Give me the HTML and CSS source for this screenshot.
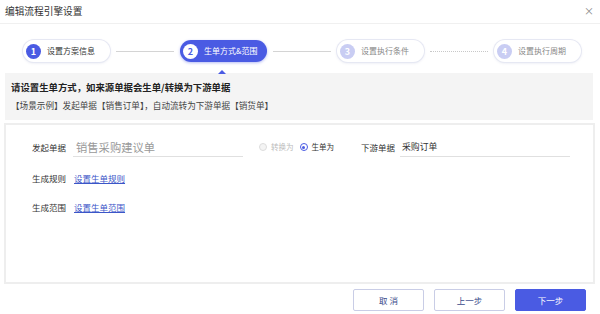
FILE: index.html
```html
<!DOCTYPE html>
<html lang="zh">
<head>
<meta charset="utf-8">
<link rel="stylesheet" href="styles.css">
</head>
<body>
<div class="dialog">
  <div class="header">
    <span class="title">编辑流程引擎设置</span>
    <span class="close">×</span>
  </div>
  <div class="steps">
    <div class="step done"><span class="num">1</span><span class="label">设置方案信息</span></div>
    <div class="line"></div>
    <div class="step active"><span class="num">2</span><span class="label">生单方式&amp;范围</span></div>
    <div class="line"></div>
    <div class="step todo"><span class="num">3</span><span class="label">设置执行条件</span></div>
    <div class="line dotted"></div>
    <div class="step todo"><span class="num">4</span><span class="label">设置执行周期</span></div>
  </div>
  <div class="info">
    <div class="info-title">请设置生单方式，如来源单据会生单/转换为下游单据</div>
    <div class="info-sub">【场景示例】发起单据【销售订单】，自动流转为下游单据【销货单】</div>
  </div>
  <div class="form">
    <div class="row">
      <span class="flabel">发起单据</span>
      <div class="input big">销售采购建议单</div>
      <div class="radios">
        <span class="radio disabled"><span class="dot"></span>转换为</span>
        <span class="radio checked"><span class="dot"></span>生单为</span>
      </div>
      <span class="flabel">下游单据</span>
      <div class="input small">采购订单</div>
    </div>
    <div class="row">
      <span class="flabel">生成规则</span>
      <a class="link">设置生单规则</a>
    </div>
    <div class="row">
      <span class="flabel">生成范围</span>
      <a class="link">设置生单范围</a>
    </div>
  </div>
  <div class="footer">
    <button class="btn">取 消</button>
    <button class="btn">上一步</button>
    <button class="btn primary">下一步</button>
  </div>
</div>
</body>
</html>
```

FILE: styles.css
```css
* { box-sizing: border-box; }
html, body {
  margin: 0;
  padding: 0;
  background: #fff;
  font-family: "Noto Sans CJK SC", "Noto Sans", sans-serif;
  color: #333;
}
.dialog {
  width: 600px;
  height: 314px;
}
.header {
  height: 24px;
  display: flex;
  align-items: center;
  justify-content: space-between;
  padding: 0 6px 0 5px;
  border-bottom: 1px solid #f0f0f0;
}
.title {
  font-size: 9.7px;
  color: #333;
  line-height: 1;
}
.close {
  font-size: 10px;
  color: #888;
  line-height: 1;
  margin-top: -1px;
}
.steps {
  display: flex;
  align-items: center;
  padding-left: 23px;
  margin-top: 16px;
  height: 22px;
}
.step {
  position: relative;
  width: 87px;
  height: 22px;
  border-radius: 11px;
  display: flex;
  align-items: center;
  padding-left: 3px;
  background: #fff;
  box-shadow: 0 0 0 1px #e6e8f3, 0 1px 3px rgba(90, 100, 160, 0.18);
}
.num {
  width: 15px;
  height: 15px;
  border-radius: 50%;
  background: #4a5be3;
  color: #fff;
  font-size: 9px;
  font-weight: 700;
  display: flex;
  align-items: center;
  justify-content: center;
  line-height: 1;
}
.label {
  font-size: 8px;
  margin-left: 6px;
  line-height: 1;
  color: #333;
}
.step.active {
  background: #4a5be3;
  box-shadow: 0 1px 3px rgba(74, 91, 227, 0.4);
}
.step.active .num {
  background: #fff;
  color: #4a5be3;
}
.step.active .label {
  color: #fff;
}
.step.active::after {
  content: "";
  position: absolute;
  left: 38px;
  top: 30px;
  border-left: 4px solid transparent;
  border-right: 4px solid transparent;
  border-bottom: 4px solid #4a5be3;
}
.step.todo .num {
  background: #c9cdf3;
}
.step.todo .label {
  color: #888;
}
.line {
  width: 58px;
  margin: 0 6px;
  border-top: 1px solid #d4d4d4;
}
.line.dotted {
  border-top: 1px dotted #c8c8c8;
}
.info {
  margin: 11px 7px 0 5px;
  background: #f4f4f4;
  height: 47px;
  padding: 6px 6px;
}
.info-title {
  font-size: 9.4px;
  font-weight: 700;
  color: #222;
  line-height: 16px;
}
.info-sub {
  font-size: 8.6px;
  color: #444;
  line-height: 12px;
  margin-top: 4px;
}
.form {
  margin: 3px 5px 0 4px;
  height: 161px;
  border: 2px solid #eeeeee;
  padding: 12px 0 0 26px;
}
.row {
  display: flex;
  align-items: center;
  height: 20px;
  margin-bottom: 11px;
}
.flabel {
  font-size: 8.5px;
  color: #333;
  line-height: 1;
  white-space: nowrap;
}
.input {
  border-bottom: 1px solid #e0e0e0;
  height: 20px;
  display: flex;
  align-items: center;
  margin-left: 7px;
}
.input.big {
  width: 170px;
  font-size: 11.3px;
  color: #999;
  padding-left: 3px;
}
.input.small {
  width: 170px;
  font-size: 8.8px;
  color: #333;
  padding-left: 2px;
  margin-left: 5px;
}
.radios {
  display: flex;
  align-items: center;
  margin-left: 16px;
  width: 102px;
}
.radio {
  display: flex;
  align-items: center;
  font-size: 7.5px;
  color: #333;
  margin-right: 6px;
  line-height: 1;
}
.radio .dot {
  width: 8px;
  height: 8px;
  border-radius: 50%;
  border: 1px solid #ccc;
  margin-right: 4px;
  position: relative;
}
.radio.disabled {
  color: #bbb;
}
.radio.disabled .dot {
  background: #f4f4f4;
  border-color: #ddd;
}
.radio.checked .dot {
  border-color: #4a5be3;
}
.radio.checked .dot::after {
  content: "";
  position: absolute;
  left: 1.5px;
  top: 1.5px;
  width: 3px;
  height: 3px;
  border-radius: 50%;
  background: #4a5be3;
}
.link {
  font-size: 8.5px;
  color: #3b56c8;
  text-decoration: underline;
  margin-left: 8px;
  line-height: 1;
}
.row + .row {
  margin-bottom: 9px;
}
.footer {
  display: flex;
  justify-content: flex-end;
  gap: 10px;
  padding-right: 14px;
  margin-top: 5px;
}
.btn {
  width: 71px;
  height: 22px;
  border: 1px solid #c9cde6;
  background: #fff;
  color: #3a4a8a;
  font-size: 8.5px;
  font-family: "Noto Sans CJK SC", sans-serif;
  border-radius: 2px;
  padding: 0;
}
.btn.primary {
  background: #4a5be3;
  border-color: #4a5be3;
  color: #fff;
}
```
